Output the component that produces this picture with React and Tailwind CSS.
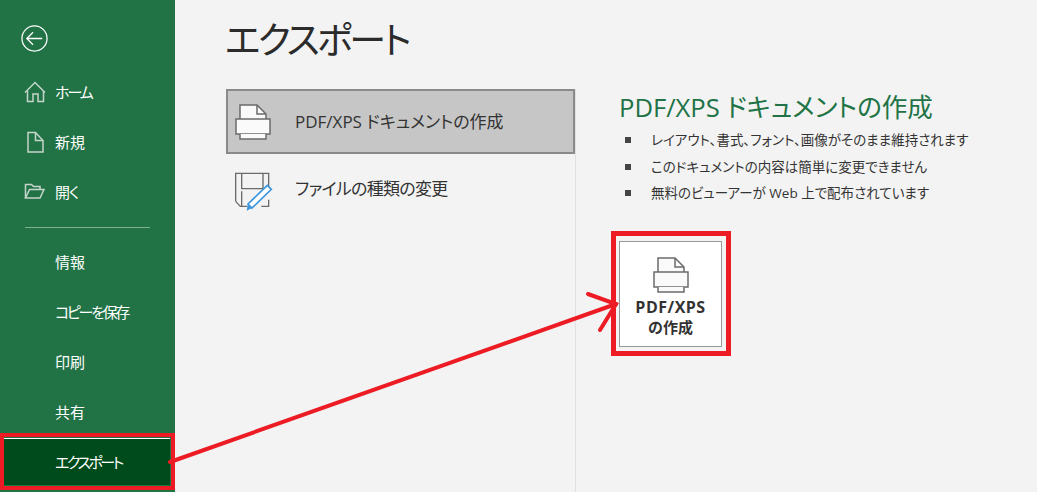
const font = { fontFamily: "'Open Sans', 'Noto Sans CJK JP', sans-serif" };

function PrinterIcon({ className }) {
  return (
    <svg viewBox="0 0 36 36" className={className} fill="none" stroke="#6b6b6b" strokeWidth="1.5">
      <path d="M5 15V1h17l9 9v5" fill="#fafafa" />
      <path d="M22 1v9h9" />
      <rect x="1" y="15" width="34" height="15" fill="#fafafa" />
      <path d="M5 30v5h26v-5" fill="#fafafa" />
    </svg>
  );
}

function ChangeTypeIcon() {
  return (
    <svg viewBox="0 0 150 144" className="w-[50px] h-[48px] shrink-0 mt-[14px]" fill="none">
      <path d="M23 100V16h99v45M23 100l14 15h22M100 115h22V95" stroke="#6b6b6b" strokeWidth="4" />
      <path d="M41 16v46h64V16M41 70v45" stroke="#6b6b6b" strokeWidth="4" />
      <path d="M60 108L118 52l12 12-58 56z" fill="#fff" stroke="#3a96dd" strokeWidth="5" />
      <path d="M56 128l4-20 12 12z" fill="#3a96dd" />
    </svg>
  );
}

const sideIcons = {
  home: (
    <svg viewBox="0 0 24 24" className="w-6 h-6" fill="none" stroke="#c5d5ca" strokeWidth="1.5">
      <path d="M2 12.500L12 2.500l10 10" />
      <path d="M4.500 11v10.500H10V14h5v7.500h5.500V11" />
    </svg>
  ),
  file: (
    <svg viewBox="0 0 24 24" className="w-6 h-6" fill="none" stroke="#c5d5ca" strokeWidth="1.5">
      <path d="M5 2.500h7.500l7.500 8v11.500H5z" />
      <path d="M12.500 2.500v8h7.500" />
    </svg>
  ),
  open: (
    <svg viewBox="0 0 24 24" className="w-6 h-6" fill="none" stroke="#c5d5ca" strokeWidth="1.5">
      <path d="M2.500 18V4.500h6l2 2h6.500v3" />
      <path d="M2.500 18h14.500l4-8.500H6.500z" />
    </svg>
  ),
};

function SideItem({ icon, label, className = "" }) {
  return (
    <div className="h-[50px] flex items-center text-white text-[15px]">
      <div className="w-[55px] pl-[23px] shrink-0">{icon}</div>
      <span className={className}>{label}</span>
    </div>
  );
}

export default function App() {
  return (
    <div className="relative w-[1037px] h-[492px] overflow-hidden flex bg-[#f3f3f3] [font-feature-settings:'palt']" style={font}>
      <aside className="w-[175px] shrink-0 bg-[#217346] flex flex-col">
        <div className="h-[67px] pt-[25px] pl-[21px]">
          <svg viewBox="0 0 28 28" className="w-[27px] h-[27px]" fill="none" stroke="#fff" strokeWidth="1.3">
            <circle cx="14" cy="14" r="13" />
            <path d="M22 14H6M12.500 7.500L6 14l6.500 6.500" />
          </svg>
        </div>
        <SideItem label="ホーム" className="tracking-[-2px]" icon={sideIcons.home} />
        <SideItem label="新規" icon={sideIcons.file} />
        <SideItem label="開く" className="tracking-[-1px]" icon={sideIcons.open} />
        <div className="h-px bg-[#7fb08f] ml-[25px] w-[125px] mt-[10px] mb-[9px]"></div>
        <SideItem label="情報" />
        <SideItem label="コピーを保存" className="tracking-[-2.300px]" />
        <SideItem label="印刷" />
        <SideItem label="共有" />
        <div className="h-[47px] mt-[1px] ml-[4px] mr-[5px] bg-[#004b1c] border-t border-white flex items-center pl-[51px] text-white text-[15px] tracking-[-2.500px]">
          エクスポート
        </div>
      </aside>

      <main className="flex-1 flex flex-col">
        <h1 className="h-[89px] pl-[50px] pt-[10px] text-[37px] leading-[60px] font-normal tracking-[-3px] text-[#2b2b2b]">エクスポート</h1>
        <div className="flex flex-1">
          <div className="w-[401px] shrink-0 pl-[51px] border-r border-[#e1e1e1] flex flex-col">
            <div className="h-[65px] bg-[#c6c6c6] border-2 border-[#8a8a8a] flex items-center pl-[7px] gap-[24px] text-[17px] text-[#333]">
              <PrinterIcon className="w-[36px] h-[36px]" />
              <span>PDF/XPS ドキュメントの作成</span>
            </div>
            <div className="h-[70px] flex items-start pl-[2px] gap-[17px] text-[17px] text-[#333]">
              <ChangeTypeIcon />
              <span className="mt-[22px] tracking-[-0.700px]">ファイルの種類の変更</span>
            </div>
          </div>
          <div className="flex-1 pl-[43px]">
            <h2 className="text-[25.600px] leading-[36px] text-[#217346] mt-[1px]">PDF/XPS ドキュメントの作成</h2>
            <ul className="mt-[1px] text-[13.500px] text-[#333]">
              {[
                "レイアウト、書式、フォント、画像がそのまま維持されます",
                "このドキュメントの内容は簡単に変更できません",
                "無料のビューアーが Web 上で配布されています",
              ].map((t) => (
                <li key={t} className="h-[26.500px] flex items-center">
                  <span className="w-[6px] h-[6px] bg-[#444] ml-[6px] mr-[20px]"></span>
                  {t}
                </li>
              ))}
            </ul>
            <div className="mt-[24px] ml-[-8px] w-[120px] h-[125px] border-[5px] border-[#ed1c24] pt-[5px] pl-[3px] pr-[4px] pb-[4px]">
              <div className="w-full h-full bg-white border border-[#999] flex flex-col items-center pt-[15px] text-[#333] font-bold text-[15px] leading-[20px]">
                <PrinterIcon className="w-[36px] h-[36px] mb-[4px]" />
                <span className="text-[16px] tracking-[0.500px]">PDF/XPS</span>
                <span>の作成</span>
              </div>
            </div>
          </div>
        </div>
      </main>

      {/* 赤枠と矢印 */}
      <div className="absolute left-0 top-[433px] w-[175px] h-[57px] border-[4px] border-[#ed1c24] pointer-events-none"></div>
      <svg className="absolute inset-0 pointer-events-none" width="1037" height="492" fill="none" stroke="#ed1c24" strokeWidth="4" strokeLinecap="round">
        <path d="M170 462L616 304" />
        <path d="M588 294L616 304L600 330" />
      </svg>
    </div>
  );
}
